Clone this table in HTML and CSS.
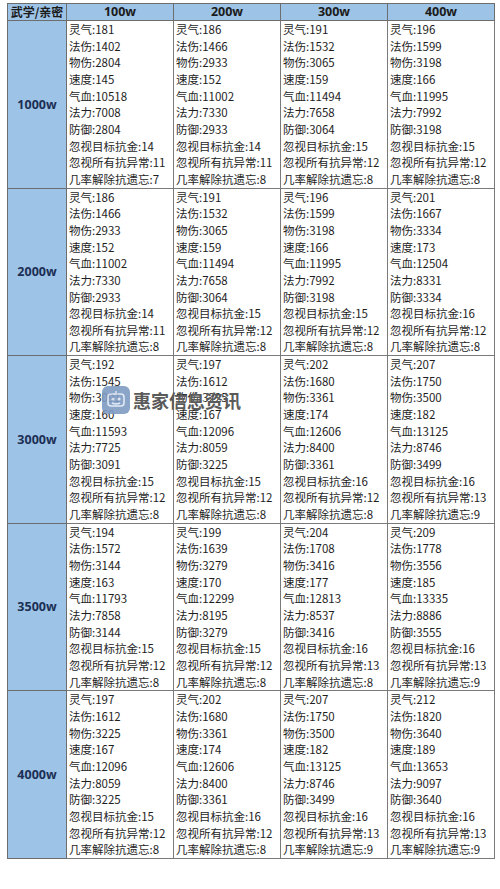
FILE: index.html
```html
<!DOCTYPE html>
<html lang="zh">
<head>
<meta charset="utf-8">
<title>武学/亲密</title>
<link rel="stylesheet" href="styles.css">
</head>
<body>
<div class="page">
<table class="stats">
<colgroup><col class="c-label"><col class="c-val"><col class="c-val"><col class="c-val"><col class="c-val"></colgroup>
<thead>
<tr><th class="corner">武学/亲密</th><th>100w</th><th>200w</th><th>300w</th><th>400w</th></tr>
</thead>
<tbody>
<tr><th class="rowhead">1000w</th>
<td><div>灵气:181</div><div>法伤:1402</div><div>物伤:2804</div><div>速度:145</div><div>气血:10518</div><div>法力:7008</div><div>防御:2804</div><div>忽视目标抗金:14</div><div>忽视所有抗异常:11</div><div>几率解除抗遗忘:7</div></td>
<td><div>灵气:186</div><div>法伤:1466</div><div>物伤:2933</div><div>速度:152</div><div>气血:11002</div><div>法力:7330</div><div>防御:2933</div><div>忽视目标抗金:14</div><div>忽视所有抗异常:11</div><div>几率解除抗遗忘:8</div></td>
<td><div>灵气:191</div><div>法伤:1532</div><div>物伤:3065</div><div>速度:159</div><div>气血:11494</div><div>法力:7658</div><div>防御:3064</div><div>忽视目标抗金:15</div><div>忽视所有抗异常:12</div><div>几率解除抗遗忘:8</div></td>
<td><div>灵气:196</div><div>法伤:1599</div><div>物伤:3198</div><div>速度:166</div><div>气血:11995</div><div>法力:7992</div><div>防御:3198</div><div>忽视目标抗金:15</div><div>忽视所有抗异常:12</div><div>几率解除抗遗忘:8</div></td>
</tr>
<tr><th class="rowhead">2000w</th>
<td><div>灵气:186</div><div>法伤:1466</div><div>物伤:2933</div><div>速度:152</div><div>气血:11002</div><div>法力:7330</div><div>防御:2933</div><div>忽视目标抗金:14</div><div>忽视所有抗异常:11</div><div>几率解除抗遗忘:8</div></td>
<td><div>灵气:191</div><div>法伤:1532</div><div>物伤:3065</div><div>速度:159</div><div>气血:11494</div><div>法力:7658</div><div>防御:3064</div><div>忽视目标抗金:15</div><div>忽视所有抗异常:12</div><div>几率解除抗遗忘:8</div></td>
<td><div>灵气:196</div><div>法伤:1599</div><div>物伤:3198</div><div>速度:166</div><div>气血:11995</div><div>法力:7992</div><div>防御:3198</div><div>忽视目标抗金:15</div><div>忽视所有抗异常:12</div><div>几率解除抗遗忘:8</div></td>
<td><div>灵气:201</div><div>法伤:1667</div><div>物伤:3334</div><div>速度:173</div><div>气血:12504</div><div>法力:8331</div><div>防御:3334</div><div>忽视目标抗金:16</div><div>忽视所有抗异常:12</div><div>几率解除抗遗忘:8</div></td>
</tr>
<tr><th class="rowhead">3000w</th>
<td><div>灵气:192</div><div>法伤:1545</div><div>物伤:3091</div><div>速度:160</div><div>气血:11593</div><div>法力:7725</div><div>防御:3091</div><div>忽视目标抗金:15</div><div>忽视所有抗异常:12</div><div>几率解除抗遗忘:8</div></td>
<td><div>灵气:197</div><div>法伤:1612</div><div>物伤:3225</div><div>速度:167</div><div>气血:12096</div><div>法力:8059</div><div>防御:3225</div><div>忽视目标抗金:15</div><div>忽视所有抗异常:12</div><div>几率解除抗遗忘:8</div></td>
<td><div>灵气:202</div><div>法伤:1680</div><div>物伤:3361</div><div>速度:174</div><div>气血:12606</div><div>法力:8400</div><div>防御:3361</div><div>忽视目标抗金:16</div><div>忽视所有抗异常:12</div><div>几率解除抗遗忘:8</div></td>
<td><div>灵气:207</div><div>法伤:1750</div><div>物伤:3500</div><div>速度:182</div><div>气血:13125</div><div>法力:8746</div><div>防御:3499</div><div>忽视目标抗金:16</div><div>忽视所有抗异常:13</div><div>几率解除抗遗忘:9</div></td>
</tr>
<tr><th class="rowhead">3500w</th>
<td><div>灵气:194</div><div>法伤:1572</div><div>物伤:3144</div><div>速度:163</div><div>气血:11793</div><div>法力:7858</div><div>防御:3144</div><div>忽视目标抗金:15</div><div>忽视所有抗异常:12</div><div>几率解除抗遗忘:8</div></td>
<td><div>灵气:199</div><div>法伤:1639</div><div>物伤:3279</div><div>速度:170</div><div>气血:12299</div><div>法力:8195</div><div>防御:3279</div><div>忽视目标抗金:15</div><div>忽视所有抗异常:12</div><div>几率解除抗遗忘:8</div></td>
<td><div>灵气:204</div><div>法伤:1708</div><div>物伤:3416</div><div>速度:177</div><div>气血:12813</div><div>法力:8537</div><div>防御:3416</div><div>忽视目标抗金:16</div><div>忽视所有抗异常:13</div><div>几率解除抗遗忘:8</div></td>
<td><div>灵气:209</div><div>法伤:1778</div><div>物伤:3556</div><div>速度:185</div><div>气血:13335</div><div>法力:8886</div><div>防御:3555</div><div>忽视目标抗金:16</div><div>忽视所有抗异常:13</div><div>几率解除抗遗忘:9</div></td>
</tr>
<tr><th class="rowhead">4000w</th>
<td><div>灵气:197</div><div>法伤:1612</div><div>物伤:3225</div><div>速度:167</div><div>气血:12096</div><div>法力:8059</div><div>防御:3225</div><div>忽视目标抗金:15</div><div>忽视所有抗异常:12</div><div>几率解除抗遗忘:8</div></td>
<td><div>灵气:202</div><div>法伤:1680</div><div>物伤:3361</div><div>速度:174</div><div>气血:12606</div><div>法力:8400</div><div>防御:3361</div><div>忽视目标抗金:16</div><div>忽视所有抗异常:12</div><div>几率解除抗遗忘:8</div></td>
<td><div>灵气:207</div><div>法伤:1750</div><div>物伤:3500</div><div>速度:182</div><div>气血:13125</div><div>法力:8746</div><div>防御:3499</div><div>忽视目标抗金:16</div><div>忽视所有抗异常:13</div><div>几率解除抗遗忘:9</div></td>
<td><div>灵气:212</div><div>法伤:1820</div><div>物伤:3640</div><div>速度:189</div><div>气血:13653</div><div>法力:9097</div><div>防御:3640</div><div>忽视目标抗金:16</div><div>忽视所有抗异常:13</div><div>几率解除抗遗忘:9</div></td>
</tr>
</tbody>
</table>

<div class="brand">
  <svg class="brand-icon" width="28" height="28" viewBox="0 0 28 28">
    <rect x="0" y="0" width="28" height="28" rx="6" fill="#7f9cc4"/>
    <rect x="6" y="8" width="16" height="12" rx="3" fill="none" stroke="#dfe8f5" stroke-width="1.6"/>
    <circle cx="11" cy="13" r="1.6" fill="#dfe8f5"/>
    <circle cx="17" cy="13" r="1.6" fill="#dfe8f5"/>
    <path d="M10 17 Q14 19 18 17" fill="none" stroke="#dfe8f5" stroke-width="1.4"/>
    <path d="M14 8 V5" stroke="#dfe8f5" stroke-width="1.4"/>
  </svg>
  <span class="brand-text">惠家信息资讯</span>
</div>
</div>
</body>
</html>
```
FILE: styles.css
```css
html, body {
  margin: 0;
  padding: 0;
  background: #ffffff;
}

.page {
  position: relative;
  width: 500px;
  height: 889px;
  padding: 3px 0 0 7px;
  box-sizing: border-box;
}

.stats {
  border-collapse: collapse;
  table-layout: fixed;
  width: 487px;
  font-family: "Noto Sans CJK SC", "Noto Sans", sans-serif;
  font-size: 11.5px;
  color: #1e1e1e;
  border: 1.5px solid #4a4a4a;
}

.c-label { width: 59px; }
.c-val { width: 107px; }

.stats thead th {
  background: #9dc3e6;
  height: 16px;
  padding: 0;
  font-size: 12.5px;
  font-weight: bold;
  line-height: 16px;
  text-align: center;
  color: #1b1b1b;
  border: 1px solid #6d6d6d;
  font-family: "Open Sans", "Noto Sans CJK SC", sans-serif;
}

.stats thead th.corner {
  font-family: "Noto Sans CJK SC", sans-serif;
  font-size: 12px;
}

.stats .rowhead {
  background: #9dc3e6;
  color: #1c2f55;
  font-family: "Open Sans", "Noto Sans", sans-serif;
  font-size: 12.5px;
  font-weight: bold;
  text-align: center;
  vertical-align: middle;
  border: 1px solid #6d6d6d;
  padding: 0;
}

.stats td {
  border: 1px solid #7a7a7a;
  padding: 0 0 0 2px;
  vertical-align: top;
  line-height: 16.65px;
  white-space: nowrap;
  overflow: hidden;
}

.brand {
  position: absolute;
  left: 102px;
  top: 386px;
  display: flex;
  align-items: center;
  gap: 3px;
}

.brand-icon {
  display: block;
  opacity: 0.9;
}

.brand-text {
  font-family: "Noto Sans CJK SC", sans-serif;
  font-weight: bold;
  font-size: 18px;
  color: #5a5a5a;
  letter-spacing: 0;
}
```
